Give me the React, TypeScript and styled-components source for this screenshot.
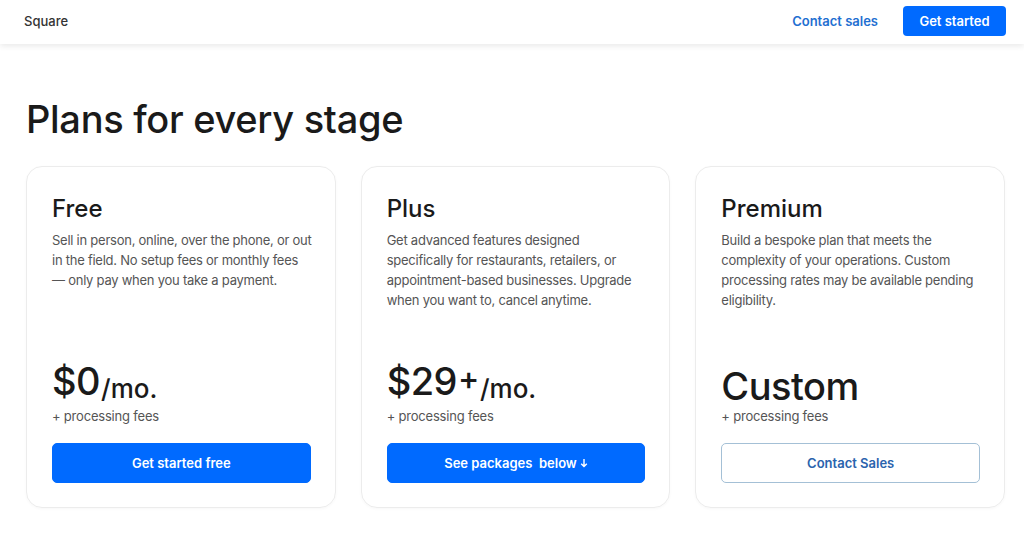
import React from "react";
import styled, { createGlobalStyle } from "styled-components";

const Global = createGlobalStyle`
  html, body { margin: 0; padding: 0; background: #fff; }
  body { font-family: Inter, "Noto Sans", sans-serif; color: #1a1a1a; -webkit-font-smoothing: antialiased; }
  * { box-sizing: border-box; }
`;

const Header = styled.header`
  height: 44px;
  display: flex;
  align-items: center;
  justify-content: space-between;
  padding: 0 18px 3px 24px;
  background: #fff;
  box-shadow: 0 2px 6px rgba(0, 0, 0, 0.09);
  position: relative;
`;

const Brand = styled.div`
  font-size: 13px;
  font-weight: 500;
  color: #333;
`;

const Nav = styled.nav`
  display: flex;
  align-items: center;
  gap: 25px;
`;

const NavLink = styled.a`
  font-size: 13px;
  font-weight: 600;
  color: #1f6fd1;
  text-decoration: none;
`;

const NavButton = styled.a`
  display: flex;
  align-items: center;
  justify-content: center;
  width: 103px;
  height: 30px;
  border-radius: 4px;
  background: #006aff;
  color: #fff;
  font-size: 13px;
  font-weight: 600;
  text-decoration: none;
`;

const Main = styled.main`
  padding: 49px 19px 30px 26px;
`;

const Heading = styled.h1`
  margin: 0 0 21px;
  font-size: 38px;
  line-height: 52px;
  font-weight: 500;
  letter-spacing: -0.3px;
  color: #1a1a1a;
`;

const Grid = styled.div`
  display: grid;
  grid-template-columns: repeat(3, 1fr);
  gap: 25px;
`;

const Card = styled.section`
  display: flex;
  flex-direction: column;
  height: 342px;
  padding: 27px 24px 24px 25px;
  border: 1px solid #ececec;
  border-radius: 16px;
  box-shadow: 0 1px 3px rgba(0, 0, 0, 0.03);
`;

const Title = styled.h2`
  margin: 0 0 6px;
  font-size: 24px;
  line-height: 30px;
  font-weight: 500;
  color: #1a1a1a;
`;

const Desc = styled.p`
  margin: 0 -2px 0 0;
  flex: 1;
  font-size: 13px;
  line-height: 20px;
  letter-spacing: -0.25px;
  color: #555;
`;

const Price = styled.div`
  display: flex;
  align-items: baseline;
  font-size: 38px;
  line-height: 36px;
  font-weight: 500;
  color: #1a1a1a;
  letter-spacing: -0.5px;
`;

const Plus = styled.span`
  font-size: 32px;
  position: relative;
  top: -5px;
  margin-left: 1px;
`;

const Per = styled.span`
  font-size: 26px;
  position: relative;
  top: 3px;
  letter-spacing: 0;
  margin-left: 1px;
`;

const Fees = styled.div`
  font-size: 13px;
  line-height: 18px;
  letter-spacing: -0.2px;
  color: #555;
  margin: 3px 0 18px;
`;

const Button = styled.a<{ $outline?: boolean }>`
  display: flex;
  align-items: center;
  justify-content: center;
  gap: 3px;
  height: 40px;
  border-radius: 5px;
  font-size: 13px;
  font-weight: 600;
  text-decoration: none;
  background: ${(p) => (p.$outline ? "#fff" : "#006aff")};
  color: ${(p) => (p.$outline ? "#2a63ad" : "#fff")};
  border: 1px solid ${(p) => (p.$outline ? "#a4c0d6" : "#006aff")};
`;

const Label = styled.span`
  white-space: pre;
`;

type Plan = {
  name: string;
  desc: string;
  price: string;
  plus?: boolean;
  per?: string;
  cta: string;
  outline?: boolean;
  arrow?: boolean;
};

const plans: Plan[] = [
  {
    name: "Free",
    desc: "Sell in person, online, over the phone, or out in the field. No setup fees or monthly fees — only pay when you take a payment.",
    price: "$0",
    per: "/mo.",
    cta: "Get started free",
  },
  {
    name: "Plus",
    desc: "Get advanced features designed specifically for restaurants, retailers, or appointment-based businesses. Upgrade when you want to, cancel anytime.",
    price: "$29",
    plus: true,
    per: "/mo.",
    cta: "See packages  below",
    arrow: true,
  },
  {
    name: "Premium",
    desc: "Build a bespoke plan that meets the complexity of your operations. Custom processing rates may be available pending eligibility.",
    price: "Custom",
    cta: "Contact Sales",
    outline: true,
  },
];

export default function App() {
  return (
    <>
      <Global />
      <Header>
        <Brand>Square</Brand>
        <Nav>
          <NavLink href="#">Contact sales</NavLink>
          <NavButton href="#">Get started</NavButton>
        </Nav>
      </Header>
      <Main>
        <Heading>Plans for every stage</Heading>
        <Grid>
          {plans.map((p) => (
            <Card key={p.name}>
              <Title>{p.name}</Title>
              <Desc>{p.desc}</Desc>
              <Price>
                {p.price}
                {p.plus && <Plus>+</Plus>}
                {p.per && <Per>{p.per}</Per>}
              </Price>
              <Fees>+ processing fees</Fees>
              <Button href="#" $outline={p.outline}>
                <Label>{p.cta}</Label>
                {p.arrow && (
                  <svg width="8" height="10" viewBox="0 0 8 10" fill="none">
                    <path d="M4 1v7.5M1.2 5.8 4 8.6l2.8-2.8" stroke="#fff" strokeWidth="1.4" />
                  </svg>
                )}
              </Button>
            </Card>
          ))}
        </Grid>
      </Main>
    </>
  );
}
